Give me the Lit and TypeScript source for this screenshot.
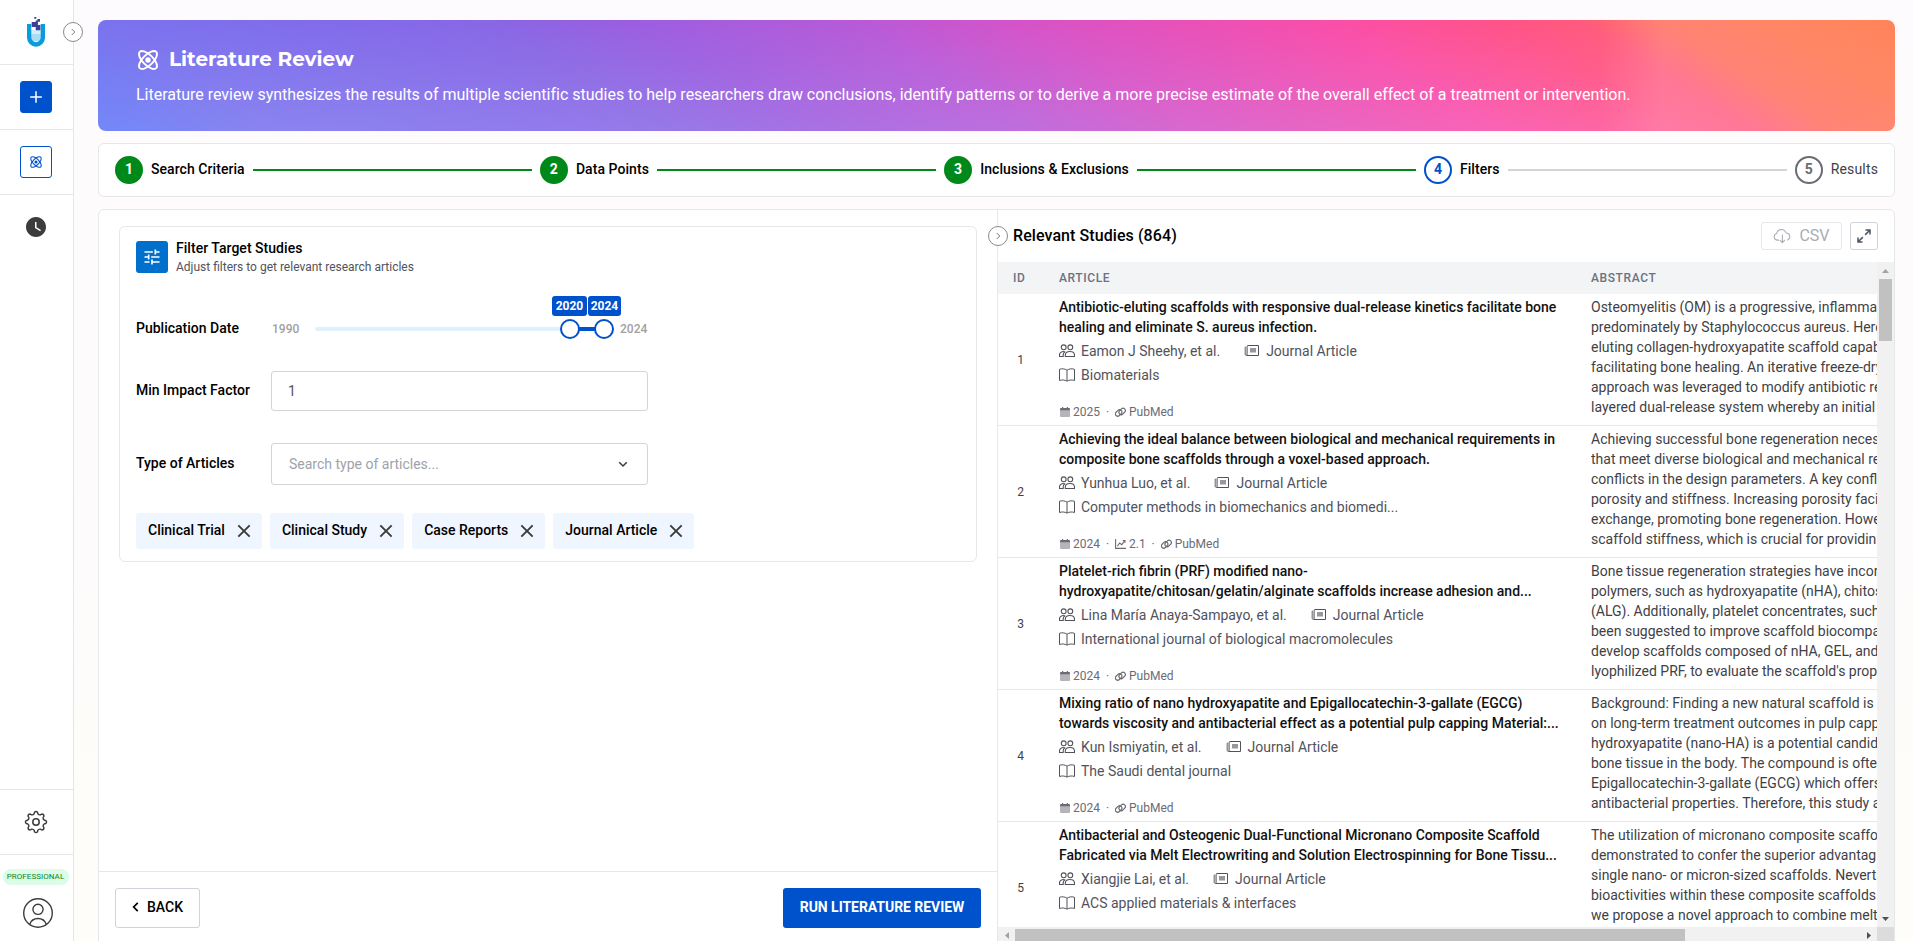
import { LitElement, html, svg, css } from "lit";
import { customElement, property } from "lit/decorators.js";
import { classMap } from "lit/directives/class-map.js";

interface Study {
  id: number;
  title: string[];
  authors: string;
  journal: string;
  year: string;
  impact?: string;
  abstract: string[];
}

const STUDIES: Study[] = [
  {
    id: 1,
    title: ["Antibiotic-eluting scaffolds with responsive dual-release kinetics facilitate bone", "healing and eliminate S. aureus infection."],
    authors: "Eamon J Sheehy, et al.",
    journal: "Biomaterials",
    year: "2025",
    abstract: [
      "Osteomyelitis (OM) is a progressive, inflamma",
      "predominately by Staphylococcus aureus. Here",
      "eluting collagen-hydroxyapatite scaffold capab",
      "facilitating bone healing. An iterative freeze-dry",
      "approach was leveraged to modify antibiotic re",
      "layered dual-release system whereby an initial",
    ],
  },
  {
    id: 2,
    title: ["Achieving the ideal balance between biological and mechanical requirements in", "composite bone scaffolds through a voxel-based approach."],
    authors: "Yunhua Luo, et al.",
    journal: "Computer methods in biomechanics and biomedi...",
    year: "2024",
    impact: "2.1",
    abstract: [
      "Achieving successful bone regeneration neces",
      "that meet diverse biological and mechanical re",
      "conflicts in the design parameters. A key confl",
      "porosity and stiffness. Increasing porosity faci",
      "exchange, promoting bone regeneration. Howe",
      "scaffold stiffness, which is crucial for providin",
    ],
  },
  {
    id: 3,
    title: ["Platelet-rich fibrin (PRF) modified nano-", "hydroxyapatite/chitosan/gelatin/alginate scaffolds increase adhesion and..."],
    authors: "Lina María Anaya-Sampayo, et al.",
    journal: "International journal of biological macromolecules",
    year: "2024",
    abstract: [
      "Bone tissue regeneration strategies have incor",
      "polymers, such as hydroxyapatite (nHA), chitos",
      "(ALG). Additionally, platelet concentrates, such",
      "been suggested to improve scaffold biocompa",
      "develop scaffolds composed of nHA, GEL, and",
      "lyophilized PRF, to evaluate the scaffold's prop",
    ],
  },
  {
    id: 4,
    title: ["Mixing ratio of nano hydroxyapatite and Epigallocatechin-3-gallate (EGCG)", "towards viscosity and antibacterial effect as a potential pulp capping Material:..."],
    authors: "Kun Ismiyatin, et al.",
    journal: "The Saudi dental journal",
    year: "2024",
    abstract: [
      "Background: Finding a new natural scaffold is",
      "on long-term treatment outcomes in pulp capp",
      "hydroxyapatite (nano-HA) is a potential candid",
      "bone tissue in the body. The compound is ofte",
      "Epigallocatechin-3-gallate (EGCG) which offers",
      "antibacterial properties. Therefore, this study a",
    ],
  },
  {
    id: 5,
    title: ["Antibacterial and Osteogenic Dual-Functional Micronano Composite Scaffold", "Fabricated via Melt Electrowriting and Solution Electrospinning for Bone Tissu..."],
    authors: "Xiangjie Lai, et al.",
    journal: "ACS applied materials & interfaces",
    year: "2024",
    abstract: [
      "The utilization of micronano composite scaffo",
      "demonstrated to confer the superior advantag",
      "single nano- or micron-sized scaffolds. Nevert",
      "bioactivities within these composite scaffolds",
      "we propose a novel approach to combine melt",
    ],
  },
];

const STEPS = [
  { label: "Search Criteria", state: "done" },
  { label: "Data Points", state: "done" },
  { label: "Inclusions & Exclusions", state: "done" },
  { label: "Filters", state: "current" },
  { label: "Results", state: "todo" },
];

const CHIPS = ["Clinical Trial", "Clinical Study", "Case Reports", "Journal Article"];

function gearPath(): string {
  const pt = (deg: number, r: number) => {
    const a = (deg * Math.PI) / 180;
    return `${(12 + r * Math.sin(a)).toFixed(2)} ${(12 - r * Math.cos(a)).toFixed(2)}`;
  };
  let d = "";
  for (let i = 0; i < 8; i++) {
    const c = i * 45;
    d += `${i === 0 ? "M" : "L"}${pt(c - 12, 8.6)}L${pt(c - 9, 9.9)}Q${pt(c, 11.3)} ${pt(c + 9, 9.9)}L${pt(c + 12, 8.6)}Q${pt(c + 22.5, 7.3)} ${pt(c + 33, 8.6)}`;
  }
  return d + "Z";
}

const ICONS = {
  atom: svg`<g fill="none" stroke="currentColor" stroke-width="1.9"><path d="M20.2 20.2c2.04-2.03.02-7.36-4.5-11.9-4.54-4.52-9.87-6.54-11.9-4.5-2.04 2.03-.02 7.36 4.5 11.9 4.54 4.52 9.87 6.54 11.9 4.5Z"/><path d="M15.7 15.7c4.52-4.54 6.54-9.87 4.5-11.9-2.03-2.04-7.36-.02-11.9 4.5-4.52 4.54-6.54 9.87-4.5 11.9 2.03 2.04 7.36.02 11.9-4.5Z"/></g><circle cx="12" cy="12" r="2.7" fill="currentColor"/>`,
  plus: svg`<path d="M12 6.2v11.6M6.2 12h11.6" stroke="currentColor" stroke-width="1.5" fill="none"/>`,
  clock: svg`<path fill="currentColor" d="M12 2C6.5 2 2 6.5 2 12s4.500 10 10 10 10-4.500 10-10S17.500 2 12 2zm4.200 14.200L11 13V7h1.500v5.200l4.500 2.700-.8 1.300z"/>`,
  gear: svg`<path d=${gearPath()} fill="none" stroke="currentColor" stroke-width="1.4" stroke-linejoin="round"/><circle cx="12" cy="12" r="3.200" fill="none" stroke="currentColor" stroke-width="1.500"/>`,
  tune: svg`<path fill="currentColor" d="M3 17v2h6v-2H3zM3 5v2h10V5H3zm10 16v-2h8v-2h-8v-2h-2v6h2zM7 9v2H3v2h4v2h2V9H7zm14 4v-2H11v2h10zm-6-4h2V7h4V5h-4V3h-2v6z"/>`,
  right: svg`<path d="M9.500 6l6 6-6 6" fill="none" stroke="currentColor" stroke-width="2"/>`,
  left: svg`<path d="M15 5l-7 7 7 7" fill="none" stroke="currentColor" stroke-width="2.900"/>`,
  down: svg`<path d="M4.500 8.500l7.500 7.500 7.500-7.500" fill="none" stroke="currentColor" stroke-width="3"/>`,
  close: svg`<path d="M3.500 3.500l17 17M20.500 3.500l-17 17" fill="none" stroke="currentColor" stroke-width="2.900"/>`,
  cloud: svg`<path d="M7.500 17.500H6a4.500 4.500 0 0 1-1.200-8.800 6.500 6.500 0 0 1 12.600-.8 4.900 4.900 0 0 1 2 9.400M12.500 10.500v10M9.500 17.800l3 3 3-3" fill="none" stroke="currentColor" stroke-width="1.400" stroke-linecap="round" stroke-linejoin="round"/>`,
  expand: svg`<path d="M14 4h6v6M20 4l-6.500 6.500M10 20H4v-6M4 20l6.500-6.500" fill="none" stroke="currentColor" stroke-width="2"/>`,
  people: svg`<g fill="none" stroke="currentColor" stroke-width="1.100"><circle cx="4.700" cy="3.300" r="2.400"/><circle cx="11.300" cy="3.300" r="2.400"/><path d="M6.300 12.500v-1.300c0-2.300 1.900-3.700 4.600-3.700s4.600 1.400 4.600 3.700v1.300zM5.200 7.500C2.300 7.400.5 8.900.5 11v1.500h3.700V11c0-1.500.8-2.700 2-3.400"/></g>`,
  news: svg`<g fill="none" stroke="currentColor"><path d="M3.500 1.500h11v10h-12"/><path d="M3.500 1.500v8.500c0 1-.5 1.500-1.200 1.500S1 11 1 10V3h2" opacity=".6"/></g><path d="M1 3.500h2v7.500H1z" fill="currentColor" opacity=".45"/><rect x="6" y="4" width="6" height="4.500" fill="currentColor" opacity=".6"/>`,
  book: svg`<path d="M8 2.200C6 .6 2.500.5.500 1.300v11.200c2-.8 5.500-.7 7.500.6 2-1.300 5.500-1.400 7.500-.6V1.300C13.500.5 10 .6 8 2.200zM8 2.200v10.900" fill="none" stroke="currentColor"/>`,
  calendar: svg`<path d="M0 3.500h10V9a1 1 0 0 1-1 1H1a1 1 0 0 1-1-1z" fill="currentColor" opacity=".5"/><path d="M0 3.500V2a1 1 0 0 1 1-1h1V0h1.200v1h3.600V0H8v1h1a1 1 0 0 1 1 1v1.500z" fill="currentColor"/>`,
  link: svg`<g fill="none" stroke="currentColor" stroke-width="1.100"><rect x="0" y="-2.300" width="7.200" height="4.600" rx="2.300" transform="translate(1.100 8.500) rotate(-45)"/><rect x="0" y="-2.300" width="7.200" height="4.600" rx="2.300" transform="translate(4.600 7) rotate(-45)"/></g>`,
  chart: svg`<path d="M.6 0v9.400H11M2.300 7.300L4.600 4l2.200 1.700 3-4M7.800 1.500h2.200v2.200" fill="none" stroke="currentColor" stroke-width="1.100"/>`,
  user: svg`<g fill="none" stroke="currentColor" stroke-width="1.400"><circle cx="16" cy="16" r="14.300"/><circle cx="16" cy="12.300" r="5.100"/><path d="M7.600 27.500c1.300-3.600 4.500-6 8.400-6s7.100 2.400 8.400 6"/></g>`,
  logo: svg`<path d="M4.500 13v9.500L15.500 22v-9z" fill="#d5eefb"/><path d="M4.500 17h11v7h-11z" fill="#aaddf5"/><path d="M1 7h4.300v13.500a4.700 4.700 0 0 0 9.400 0V7H19v13.700a9 9 0 0 1-18 0z" fill="#0a9bdc"/><path d="M8.300 0h2v1.800h-2zM11.400 2h2.600v2.800h-2.600zM5.700 5h4v-1.500h2.200V8h2.500v5.200H9.700V10h-4z" fill="#3d3f99"/>`,
};

const icon = (name: keyof typeof ICONS, cls: string, box = "0 0 24 24") =>
  html`<svg class="icon ${cls}" viewBox=${box} aria-hidden="true">${ICONS[name]}</svg>`;

const base = css`
  * { box-sizing: border-box; }
  .icon { display: block; flex: none; }
`;

@customElement("side-bar")
class SideBar extends LitElement {
  static styles = [base, css`
    :host { display: flex; flex-direction: column; width: 74px; flex: none; background: #fff; border-right: 1px solid #e5e6e8; position: relative; }
    .cell { height: 65px; padding-right: 1px; border-bottom: 1px solid #e5e6e8; display: flex; align-items: center; justify-content: center; }
    .plain { border-bottom: 0; height: 64px; }
    .spacer { flex: 1; border-bottom: 1px solid #e5e6e8; }
    .logo { width: 20px; height: 30px; }
    .btn { width: 32px; height: 32px; border-radius: 3px; display: flex; align-items: center; justify-content: center; border: 1px solid #0052cc; color: #0052cc; }
    .solid { background: #0052cc; color: #fff; }
    .i24 { width: 24px; height: 24px; }
    .i14 { width: 14px; height: 14px; }
    .dark { color: #3c3c3c; }
    .account { height: 86px; display: flex; flex-direction: column; align-items: center; padding-top: 14px; gap: 12px; }
    .plan { width: 66px; height: 16px; border-radius: 8px; background: #dcfce7; color: #0b8526; font: 400 8px/16px Roboto, sans-serif; text-align: center; margin-right: 2px; letter-spacing: .05px; }
    .avatar { width: 32px; height: 32px; color: #3c3c3c; margin-left: 3px; }
    .toggle { position: absolute; right: -10px; top: 22px; width: 20px; height: 20px; border-radius: 50%; border: 1px solid #8a8a8a; background: #fff; color: #777; display: flex; align-items: center; justify-content: center; }
    .i12 { width: 12px; height: 12px; }
  `];
  render() {
    return html`
      <div class="cell">${icon("logo", "logo", "0 0 20 30")}</div>
      <div class="cell"><div class="btn solid">${icon("plus", "i24")}</div></div>
      <div class="cell"><div class="btn">${icon("atom", "i14")}</div></div>
      <div class="cell plain">${icon("clock", "i24 dark")}</div>
      <div class="spacer"></div>
      <div class="cell">${icon("gear", "i24 dark")}</div>
      <div class="account"><div class="plan">PROFESSIONAL</div>${icon("user", "avatar", "0 0 32 32")}</div>
      <div class="toggle">${icon("right", "i12")}</div>
    `;
  }
}

@customElement("step-track")
class StepTrack extends LitElement {
  static styles = [base, css`
    :host { display: flex; align-items: center; gap: 8px; height: 54px; border: 1px solid #e5e7eb; border-radius: 6px; background: #fff; padding: 0 16px; flex: none; }
    .dot { width: 28px; height: 28px; border-radius: 50%; border: 2px solid #6b6b74; color: #6b6b74; font: 700 14px/23px Roboto, sans-serif; text-align: center; flex: none; }
    .label { font: 500 14px/20px Roboto, sans-serif; color: #3f3f46; white-space: nowrap; letter-spacing: .06px; padding-bottom: 2px; }
    .line { height: 2px; flex: 1; background: #d4d4d4; }
    .dot.done { background: #00891a; border-color: #00891a; color: #fff; }
    .dot.current { border-color: #0052cc; color: #0052cc; }
    .label.done, .label.current { color: #000; }
    .line.done { background: #00891a; }
    .label.todo { font-weight: 400; letter-spacing: .15px; }
  `];
  render() {
    return STEPS.map((s, i) => {
      const c = { [s.state]: true };
      return html`<div class=${classMap({ dot: true, ...c })}>${i + 1}</div>
        <div class=${classMap({ label: true, ...c })}>${s.label}</div>
        ${i < STEPS.length - 1 ? html`<div class=${classMap({ line: true, ...c })}></div>` : ""}`;
    });
  }
}

@customElement("filter-panel")
class FilterPanel extends LitElement {
  static styles = [base, css`
    :host { display: flex; flex-direction: column; width: 898px; flex: none; font-family: Roboto, sans-serif; color: #000; }
    .body { flex: 1; padding: 16px 20px 0; }
    .card { width: 858px; height: 336px; border: 1px solid #e5e7eb; border-radius: 6px; padding: 14px 16px 0; }
    .head { display: flex; gap: 8px; height: 32px; }
    .badge { width: 32px; height: 32px; border-radius: 3px; background: #0070cc; color: #fff; display: flex; align-items: center; justify-content: center; }
    .i20 { width: 20px; height: 20px; }
    .title { font-size: 14px; font-weight: 500; line-height: 14px; letter-spacing: .03px; }
    .sub { font-size: 12px; line-height: 20px; color: #52525b; padding-top: 2px; }
    .row { display: flex; align-items: center; }
    .name { width: 135px; font-size: 14px; font-weight: 500; padding-bottom: 2px; }
    .date { height: 54px; margin-top: 29px; }
    .limit { font-size: 12px; font-weight: 500; color: #a1a1a1; }
    .low { width: 44px; padding-left: 1px; }
    .high { padding-left: 6px; }
    .track { width: 299px; height: 4px; border-radius: 2px; background: #dff1fd; position: relative; }
    .range { position: absolute; left: 255px; width: 34px; height: 4px; background: #0052cc; }
    .knob { position: absolute; top: -8px; width: 20px; height: 20px; border-radius: 50%; border: 2px solid #0052cc; background: #fff; }
    .k1 { left: 245px; }
    .k2 { left: 279px; }
    .tip { position: absolute; top: -31px; height: 20px; width: 34px; border-radius: 3px; background: #0052cc; color: #fff; font: 700 12px/20px Roboto, sans-serif; text-align: center; }
    .t1 { left: 237px; width: 35px; }
    .t2 { left: 273px; width: 33px; }
    .field { width: 377px; border: 1px solid #d4d4d4; border-radius: 3px; display: flex; align-items: center; padding: 0 17px 1px 16px; font-size: 14px; color: #52525b; }
    .factor { height: 40px; margin-top: 15px; }
    .factor .field { height: 40px; }
    .kind { height: 42px; margin-top: 32px; }
    .kind .field { height: 42px; justify-content: space-between; color: #a1a1aa; padding: 0 18px 1px 17px; }
    .i11 { width: 12px; height: 12px; color: #3c3c3c; }
    .chips { display: flex; gap: 8px; margin-top: 28px; }
    .chip { height: 36px; border-radius: 3px; background: #eff6ff; display: flex; align-items: center; gap: 11px; padding: 0 10px 0 12px; font-size: 14px; font-weight: 500; white-space: nowrap; }
    .word { padding-bottom: 2px; }
    .i14 { width: 16px; height: 16px; color: #3c3c3c; }
    .foot { height: 73px; border-top: 1px solid #e5e7eb; padding: 16px 16px 0; display: flex; justify-content: space-between; }
    .btn { height: 40px; border-radius: 3px; display: flex; align-items: center; font-size: 14px; font-weight: 500; padding-bottom: 2px; }
    .back { width: 85px; border: 1px solid #d1d3da; padding-left: 13px; gap: 4px; }
    .i13 { width: 14px; height: 14px; }
    .run { width: 198px; background: #0052cc; color: #fff; justify-content: center; font-weight: 700; letter-spacing: -.05px; }
  `];
  render() {
    return html`
      <div class="body"><div class="card">
        <div class="head">
          <div class="badge">${icon("tune", "i20")}</div>
          <div><div class="title">Filter Target Studies</div><div class="sub">Adjust filters to get relevant research articles</div></div>
        </div>
        <div class="row date">
          <div class="name">Publication Date</div>
          <div class="limit low">1990</div>
          <div class="track"><div class="range"></div><div class="knob k1"></div><div class="knob k2"></div><div class="tip t1">2020</div><div class="tip t2">2024</div></div>
          <div class="limit high">2024</div>
        </div>
        <div class="row factor"><div class="name">Min Impact Factor</div><div class="field">1</div></div>
        <div class="row kind"><div class="name">Type of Articles</div><div class="field">Search type of articles...${icon("down", "i11")}</div></div>
        <div class="chips">${CHIPS.map((c) => html`<div class="chip"><span class="word">${c}</span>${icon("close", "i14")}</div>`)}</div>
      </div></div>
      <div class="foot">
        <div class="btn back">${icon("left", "i13")}BACK</div>
        <div class="btn run">RUN LITERATURE REVIEW</div>
      </div>
    `;
  }
}

@customElement("study-row")
class StudyRow extends LitElement {
  @property({ attribute: false }) study!: Study;
  static styles = [base, css`
    :host { display: flex; width: 1200px; height: 132px; border-bottom: 1px solid #e5e7eb; font: 14px/20px Roboto, sans-serif; color: #4b5563; flex: none; }
    .id { width: 46px; height: 131px; display: flex; align-items: center; justify-content: center; font-size: 12px; color: #3f3f46; padding-right: 1px; }
    .article { width: 547px; height: 131px; padding: 3px 15px 0; }
    .line { white-space: nowrap; }
    .title { font-weight: 500; color: #111; }
    .meta { display: flex; align-items: center; height: 24px; white-space: nowrap; color: #52525b; }
    .authors { margin-top: 2px; }
    .i16 { width: 16px; height: 14px; margin-right: 6px; color: #52525b; }
    .gap { margin-left: 24px; }
    .foot { display: flex; align-items: center; height: 20px; margin-top: 15px; font-size: 12px; color: #6b6b74; }
    .cal { width: 10px; height: 10px; margin: 0 3px 0 1px; }
    .sm { width: 11px; height: 11px; margin-right: 3px; }
    .sep { width: 15px; text-align: center; }
    .abstract { padding-top: 3px; height: 131px; overflow: hidden; color: #3f3f46; }
  `];
  render() {
    const s = this.study;
    return html`
      <div class="id">${s.id}</div>
      <div class="article">
        ${s.title.map((t) => html`<div class="line title">${t}</div>`)}
        <div class="meta authors">${icon("people", "i16", "0 0 16 14")}${s.authors}${icon("news", "i16 gap", "0 0 16 14")}Journal Article</div>
        <div class="meta">${icon("book", "i16", "0 0 16 14")}${s.journal}</div>
        <div class="foot">
          ${icon("calendar", "cal", "0 0 10 10")}${s.year}<span class="sep">·</span>
          ${s.impact ? html`${icon("chart", "sm", "0 0 11 11")}${s.impact}<span class="sep">·</span>` : ""}
          ${icon("link", "sm", "0 0 11 11")}PubMed
        </div>
      </div>
      <div class="abstract">${s.abstract.map((t) => html`<div class="line">${t}</div>`)}</div>
    `;
  }
}

@customElement("studies-panel")
class StudiesPanel extends LitElement {
  static styles = [base, css`
    :host { display: flex; flex-direction: column; flex: 1; min-width: 0; border-left: 1px solid #e5e7eb; position: relative; font-family: Roboto, sans-serif; }
    .toggle { position: absolute; left: -10px; top: 16px; width: 20px; height: 20px; border-radius: 50%; border: 1px solid #8a8a8a; background: #fff; color: #777; display: flex; align-items: center; justify-content: center; }
    .i12 { width: 12px; height: 12px; }
    .head { height: 52px; flex: none; display: flex; align-items: center; gap: 8px; padding: 0 16px 0 15px; }
    .title { flex: 1; font-size: 16px; font-weight: 500; color: #000; padding-bottom: 2px; letter-spacing: .08px; }
    .btn { height: 28px; border: 1px solid #e5e7eb; border-radius: 3px; display: flex; align-items: center; justify-content: center; gap: 8px; }
    .csv { width: 81px; color: #a9abb2; font-size: 16px; padding-bottom: 1px; }
    .i18 { width: 18px; height: 18px; }
    .full { width: 28px; border-color: #d1d3da; color: #4b5563; }
    .i17 { width: 18px; height: 18px; }
    .area { flex: none; height: 665px; display: flex; }
    .table { flex: 1; min-width: 0; overflow: hidden; display: flex; flex-direction: column; }
    .cols { width: 1200px; height: 32px; flex: none; background: #f3f4f6; display: flex; align-items: center; font-size: 12px; font-weight: 500; color: #6b7280; letter-spacing: .6px; }
    .c1 { width: 61px; padding-left: 15px; }
    .c2 { width: 532px; }
    .vbar { width: 17px; background: #f1f1f1; display: flex; flex-direction: column; padding: 0 2px; }
    .arrow { height: 17px; display: flex; align-items: center; justify-content: center; flex: none; }
    .thumb { height: 62px; background: #c1c1c1; }
    .push { flex: 1; }
    .tri { width: 7px; height: 4px; display: block; }
    .side { width: 4px; height: 7px; display: block; }
    .off { fill: #a3a3a3; }
    .on { fill: #505050; }
    .hbar { height: 14px; flex: none; display: flex; background: #f1f1f1; }
    .hthumb { width: 670px; margin-top: 2px; background: #c1c1c1; }
    .cap { width: 17px; height: 17px; display: flex; align-items: center; justify-content: center; }
    .corner { width: 17px; background: #dcdcdc; }
  `];
  render() {
    return html`
      <div class="head">
        <div class="title">Relevant Studies (864)</div>
        <div class="btn csv">${icon("cloud", "i18")}CSV</div>
        <div class="btn full">${icon("expand", "i17")}</div>
      </div>
      <div class="area">
        <div class="table">
          <div class="cols"><div class="c1">ID</div><div class="c2">ARTICLE</div><div>ABSTRACT</div></div>
          ${STUDIES.map((s) => html`<study-row .study=${s}></study-row>`)}
        </div>
        <div class="vbar">
          <div class="arrow"><svg class="tri off" viewBox="0 0 7 4"><path d="M0 4L3.500 0 7 4z"/></svg></div>
          <div class="thumb"></div><div class="push"></div>
          <div class="arrow"><svg class="tri on" viewBox="0 0 7 4"><path d="M0 0h7L3.500 4z"/></svg></div>
        </div>
      </div>
      <div class="hbar">
        <div class="cap"><svg class="side off" viewBox="0 0 4 7"><path d="M4 0v7L0 3.500z"/></svg></div>
        <div class="hthumb"></div><div class="push"></div>
        <div class="cap"><svg class="side on" viewBox="0 0 4 7"><path d="M0 0v7l4-3.500z"/></svg></div>
        <div class="corner"></div>
      </div>
      <div class="toggle">${icon("right", "i12")}</div>
    `;
  }
}

@customElement("app-root")
class AppRoot extends LitElement {
  static styles = [base, css`
    :host { display: flex; width: 100%; height: 100vh; overflow: hidden; background: linear-gradient(180deg, #fdfbfd 0, #fdfbfc 50%, #fffdf9 85%, #fffdf9 100%); font-family: Roboto, sans-serif; }
    main { flex: 1; min-width: 0; padding: 20px 18px 0 24px; display: flex; flex-direction: column; gap: 12px; }
    .banner { height: 111px; flex: none; border-radius: 8px; padding: 26px 38px 0; color: #fff;
      background:
        linear-gradient(90deg, transparent 83.500%, rgba(255,255,255,.13) 87%, rgba(255,255,255,0) 100%),
        linear-gradient(180deg, rgba(255,255,255,0), rgba(255,255,255,.12)),
        linear-gradient(31.700deg, #6078f7 0, #7a72ee 9.100%, #8469e8 24.400%, #8a66e4 29.400%, #9b5ee0 36%, #b75ad8 47.100%, #d553c8 55.500%, #f94eaa 71%, #ff5388 80%, #ff5a7c 84%, #ff705f 88%, #ff7e59 94%, #ff8459 100%); }
    .title { display: flex; align-items: center; gap: 9px; height: 26px; font: 700 20px/26px Montserrat, Inter, sans-serif; }
    .i24 { width: 24px; height: 24px; margin-top: 2px; }
    .desc { margin-top: 12px; font-size: 16px; line-height: 22px; white-space: nowrap; letter-spacing: -.008px; }
    .panel { height: 760px; flex: none; display: flex; border: 1px solid #e5e7eb; border-radius: 6px; background: #fff; }
    filter-panel { height: 734px; }
  `];
  render() {
    return html`
      <side-bar></side-bar>
      <main>
        <div class="banner">
          <div class="title">${icon("atom", "i24")}Literature Review</div>
          <div class="desc">Literature review synthesizes the results of multiple scientific studies to help researchers draw conclusions, identify patterns or to derive a more precise estimate of the overall effect of a treatment or intervention.</div>
        </div>
        <step-track></step-track>
        <div class="panel"><filter-panel></filter-panel><studies-panel></studies-panel></div>
      </main>
    `;
  }
}
